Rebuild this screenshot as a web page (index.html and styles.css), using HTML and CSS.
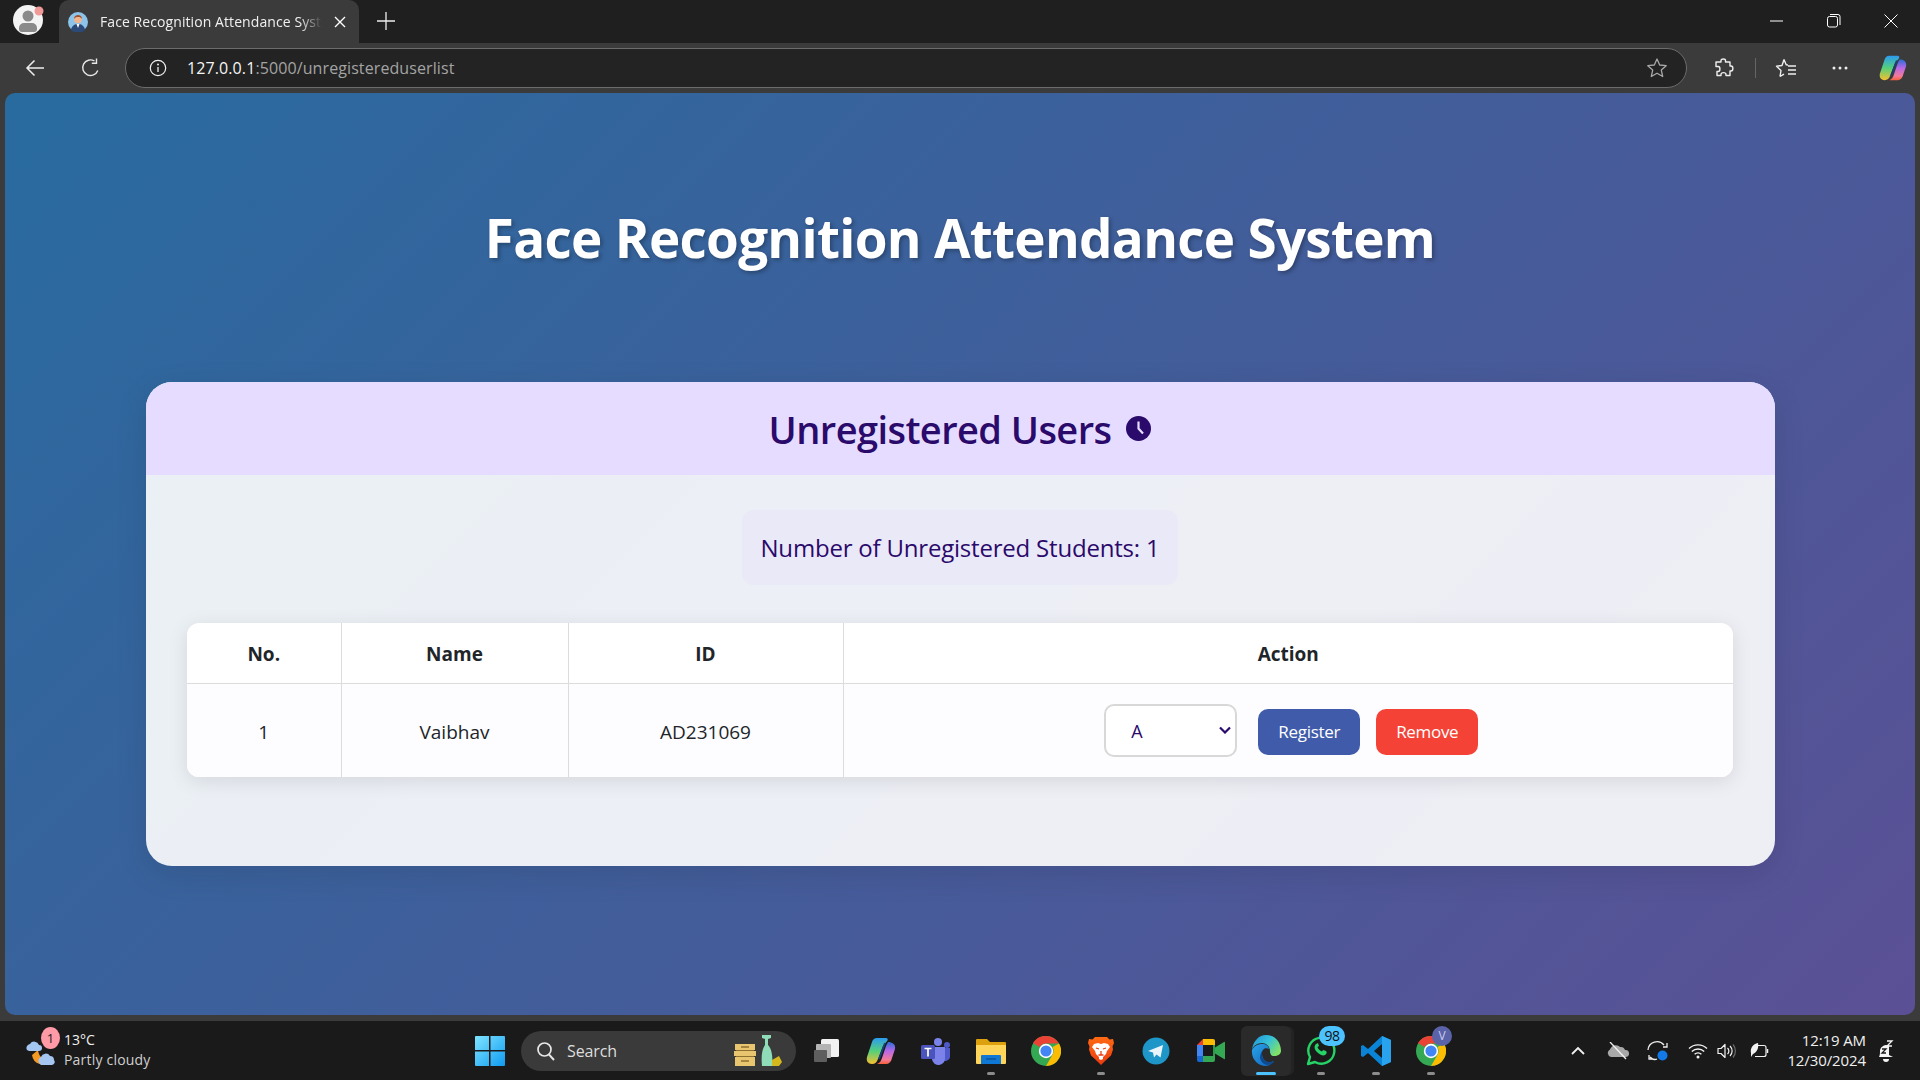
FILE: index.html
```html
<!DOCTYPE html>
<html lang="en">
<head>
<meta charset="utf-8">
<title>Face Recognition Attendance System</title>
<link rel="stylesheet" href="styles.css">
</head>
<body>
<header class="tabstrip">
  <div class="avatar">
    <svg width="40" height="40" viewBox="0 0 40 40"><circle cx="20" cy="20" r="15" fill="#f4f4f4"/><circle cx="20" cy="16" r="5.5" fill="#8a8a8a"/><path d="M11 28a5 5 0 0 1 5-5h8a5 5 0 0 1 5 5v1a3 3 0 0 1-3 3H14a3 3 0 0 1-3-3z" fill="#8a8a8a"/><circle cx="31" cy="11" r="4.5" fill="#f29a9a"/></svg>
  </div>
  <div class="tab">
    <svg class="favicon" width="20" height="20" viewBox="0 0 20 20"><circle cx="10" cy="10" r="10" fill="#8cc4ea"/><path d="M3 18c1-5 4-6 7-6s6 1 7 6a10 10 0 0 1-14 0z" fill="#2c4a78"/><path d="M8.500 12h3l-1.500 4z" fill="#fff"/><circle cx="10" cy="7.500" r="3.800" fill="#f0b48e"/><path d="M6 7c0-3 2-4 4-4s4 1 4 4c-1-1.500-2-2-4-2s-3 .5-4 2z" fill="#a0522d"/></svg>
    <span class="tab-title">Face Recognition Attendance Syst</span>
    <svg class="tab-close" width="12" height="12" viewBox="0 0 12 12"><path d="M1 1l10 10M11 1L1 11" stroke="#fff" stroke-width="1.400"/></svg>
  </div>
  <svg class="newtab" width="18" height="18" viewBox="0 0 18 18"><path d="M9 0v18M0 9h18" stroke="#eee" stroke-width="1.300"/></svg>
  <div class="winctl">
    <svg width="14" height="14" viewBox="0 0 14 14"><path d="M0 7h13" stroke="#fff" stroke-width="1"/></svg>
    <svg width="14" height="14" viewBox="0 0 14 14"><rect x=".5" y="2.500" width="10" height="10.500" rx="2" fill="none" stroke="#fff"/><path d="M3 .5h8a2 2 0 0 1 2 2V11" fill="none" stroke="#fff"/></svg>
    <svg width="14" height="14" viewBox="0 0 14 14"><path d="M.5.5l13 13M13.500.5l-13 13" stroke="#fff"/></svg>
  </div>
</header>

<nav class="toolbar">
  <svg class="tb-back" width="20" height="18" viewBox="0 0 20 18"><path d="M19 9H2M9.500 1.500L2 9l7.500 7.500" fill="none" stroke="#eee" stroke-width="1.500"/></svg>
  <svg class="tb-reload" width="20" height="20" viewBox="0 0 20 20"><path d="M16.800 12.500A7.800 7.800 0 1 1 13.500 3" fill="none" stroke="#e8e8e8" stroke-width="1.400"/><path d="M15.500 .5v4.700h-4.700" fill="none" stroke="#e8e8e8" stroke-width="1.400"/></svg>
  <div class="addressbar">
    <svg width="18" height="18" viewBox="0 0 18 18"><circle cx="9" cy="9" r="7.700" fill="none" stroke="#eee" stroke-width="1.200"/><path d="M9 8v5" stroke="#eee" stroke-width="1.300"/><circle cx="9" cy="5.500" r="1" fill="#eee"/></svg>
    <span class="url"><span class="url-host">127.0.0.1</span>:5000/unregistereduserlist</span>
    <svg class="addr-star" width="22" height="22" viewBox="0 0 22 22"><path d="M11 2l2.700 6 6.500.7-4.900 4.400 1.400 6.400L11 16.200 5.300 19.500l1.400-6.400L1.800 8.700 8.300 8z" fill="none" stroke="#a8a8a8" stroke-width="1.300" stroke-linejoin="round"/></svg>
  </div>
  <div class="tb-tools">
    <svg class="t-ext" width="20" height="20" viewBox="0 0 20 20"><path d="M7 2.500c0-2 4.500-2 4.500 0V4h4.500v4h1c2.500 0 2.500 5 0 5h-1v4.500h-4v-1c0-2.500-5-2.500-5 0v1H3v-4h1.200c2.300 0 2.300-5 0-5H2V4h5z" fill="none" stroke="#eee" stroke-width="1.400" stroke-linejoin="round"/></svg>
    <span class="t-sep"></span>
    <svg class="t-fav" width="22" height="20" viewBox="0 0 22 20"><path d="M9 1.500l2.200 5.300 1.800.2M5 18.500l1-6L1.500 8.300 7 7.500 9 1.500M5 18.500l4-2.300" fill="none" stroke="#eee" stroke-width="1.400" stroke-linejoin="round"/><path d="M13 8h8M13 12h8M13 16h8" stroke="#eee" stroke-width="1.400"/></svg>
    <svg class="t-more" width="16" height="4" viewBox="0 0 16 4"><circle cx="2" cy="2" r="1.500" fill="#eee"/><circle cx="8" cy="2" r="1.500" fill="#eee"/><circle cx="14" cy="2" r="1.500" fill="#eee"/></svg>
    <svg class="t-copilot" width="28" height="28" viewBox="0 0 30 28"><defs><linearGradient id="cpa" x1="0" y1="0" x2="0" y2="1"><stop offset="0" stop-color="#2b9cf0"/><stop offset=".5" stop-color="#55d07a"/><stop offset="1" stop-color="#f6c030"/></linearGradient><linearGradient id="cpb" x1="0" y1="0" x2="0" y2="1"><stop offset="0" stop-color="#2a6fd8"/><stop offset=".4" stop-color="#b468e8"/><stop offset=".8" stop-color="#f47a9a"/><stop offset="1" stop-color="#f6603a"/></linearGradient></defs><path d="M11 1h9c1.500 0 2 1 1.500 2.500L17 9l-5 13c-1 3-3 5-6 5-4 0-6-3-5-7L6 5c.8-2.500 2.500-4 5-4z" fill="url(#cpa)"/><path d="M22 5c4 0 8 2 7 7l-3 9c-1 4-3 6-6 6h-9c3-1 4-3 5-6l4-12z" fill="url(#cpb)"/><path d="M19 6l-6 16" stroke="#17407f" stroke-width="1.800"/></svg>
  </div>
</nav>

<main class="viewport">
  <h1 class="page-title">Face Recognition Attendance System</h1>
  <section class="card">
    <div class="card-head">
      <h2 class="card-title">Unregistered Users</h2>
      <svg width="25" height="25" viewBox="0 0 25 25"><circle cx="12.500" cy="12.500" r="12.500" fill="#2a0a6b"/><path d="M12.500 5.500v7l4.500 5" fill="none" stroke="#e6dcff" stroke-width="2.200"/></svg>
    </div>
    <div class="card-body">
      <div class="count-box">Number of Unregistered Students: 1</div>
      <table class="users">
        <thead>
          <tr><th class="c-no">No.</th><th class="c-name">Name</th><th class="c-id">ID</th><th>Action</th></tr>
        </thead>
        <tbody>
          <tr>
            <td class="cell-text">1</td><td class="cell-text">Vaibhav</td><td class="cell-text">AD231069</td>
            <td>
              <div class="actions">
                <select class="section-select"><option>A</option><option>B</option></select>
                <button class="btn btn-register">Register</button>
                <button class="btn btn-remove">Remove</button>
              </div>
            </td>
          </tr>
        </tbody>
      </table>
    </div>
  </section>
</main>

<footer class="taskbar">
  <div class="weather">
    <div class="weather-icon">
      <svg width="32" height="34" viewBox="0 0 32 34"><path d="M7 21a11 11 0 0 0 19 6A12 12 0 0 1 13 16z" fill="#f39a24"/><path d="M2 16a4 4 0 0 1 3-6 5 5 0 0 1 9 1 3 3 0 0 1 0 6H4z" fill="#a6c6f2"/><path d="M15 30a4 4 0 0 1 1-7 5 5 0 0 1 9-1 4 4 0 0 1 4 4 3 3 0 0 1-2 5H16z" fill="#a6c6f2"/></svg>
      <span class="weather-badge">1</span>
    </div>
    <div class="weather-text"><span>13°C</span><span class="weather-sub">Partly cloudy</span></div>
  </div>

  <div class="task-center">
    <svg class="start" width="30" height="30" viewBox="0 0 30 30"><defs><linearGradient id="win" x1="0" y1="0" x2="1" y2="1"><stop offset="0" stop-color="#7fe4ff"/><stop offset="1" stop-color="#0f9bf2"/></linearGradient></defs><path d="M0 1a1 1 0 0 1 1-1h13v14H0zM15.500 0H29a1 1 0 0 1 1 1v13H15.500zM0 15.500h14V30H1a1 1 0 0 1-1-1zM15.500 15.500H30V29a1 1 0 0 1-1 1H15.500z" fill="url(#win)"/></svg>
    <div class="searchbox">
      <svg width="20" height="20" viewBox="0 0 20 20"><circle cx="8.500" cy="8.500" r="6.500" fill="none" stroke="#e8e8e8" stroke-width="1.700"/><path d="M13 13.500l5 5.500" stroke="#e8e8e8" stroke-width="1.900"/></svg>
      <span class="search-label">Search</span>
      <svg class="search-art" width="48" height="32" viewBox="0 0 48 32"><path d="M1 9h20v6H1zM0 16h22v5H0zM1 22h20v9H1z" fill="#e8c56e"/><path d="M2 15h18v1H2zM2 21h18v1H2z" fill="#8d7030"/><path d="M7 12h8M7 26h8" stroke="#8d7030" stroke-width="1.500"/><path d="M28 0h9v3l-3 1v6c4 4 5 12 4 21h-10c-1-9 0-17 3-21V4l-3-1z" fill="#8fdcb8"/><path d="M38 25l7-4 3 6-3 4h-7z" fill="#d6b81e"/></svg>
    </div>
    <div class="app app-first">
      <svg width="28" height="28" viewBox="0 0 28 28"><rect x="9" y="2" width="18" height="18" rx="1.500" fill="#f2f2f2"/><rect x="4" y="7" width="15" height="14" rx="1" fill="#b4b4b4"/><rect x="2" y="13" width="13" height="12" rx="1" fill="#5e5e5e"/></svg>
    </div>
    <div class="app">
      <svg width="30" height="28" viewBox="0 0 30 28"><defs><linearGradient id="cpc" x1="0" y1="0" x2="0" y2="1"><stop offset="0" stop-color="#2b9cf0"/><stop offset=".5" stop-color="#55d07a"/><stop offset="1" stop-color="#f6c030"/></linearGradient><linearGradient id="cpd" x1="0" y1="0" x2="0" y2="1"><stop offset="0" stop-color="#2a6fd8"/><stop offset=".4" stop-color="#b468e8"/><stop offset=".8" stop-color="#f47a9a"/><stop offset="1" stop-color="#f6603a"/></linearGradient></defs><path d="M11 1h9c1.500 0 2 1 1.500 2.500L17 9l-5 13c-1 3-3 5-6 5-4 0-6-3-5-7L6 5c.8-2.500 2.500-4 5-4z" fill="url(#cpc)"/><path d="M22 5c4 0 8 2 7 7l-3 9c-1 4-3 6-6 6h-9c3-1 4-3 5-6l4-12z" fill="url(#cpd)"/><path d="M19 6l-6 16" stroke="#17407f" stroke-width="1.800"/></svg>
    </div>
    <div class="app">
      <svg width="30" height="28" viewBox="0 0 30 28"><circle cx="17" cy="5" r="4" fill="#7b83eb"/><circle cx="26" cy="8" r="3" fill="#5059c9"/><path d="M21 11h8v9a5 5 0 0 1-8 3z" fill="#5059c9"/><path d="M9 10h15v11a6.500 6.500 0 0 1-13 1z" fill="#7b83eb"/><rect x="0" y="8" width="14" height="14" rx="1.500" fill="#4b53bc"/><path d="M3.500 11.500h7M7 11.500v8" stroke="#fff" stroke-width="1.700"/></svg>
    </div>
    <div class="app has-dot">
      <svg width="30" height="28" viewBox="0 0 30 28"><path d="M0 3a1 1 0 0 1 1-1h10l3 3h15a1 1 0 0 1 1 1v4H0z" fill="#dca10c"/><path d="M0 8h30v18a1 1 0 0 1-1 1H1a1 1 0 0 1-1-1z" fill="#ffd65a"/><path d="M5 19a1 1 0 0 1 1-1h18a1 1 0 0 1 1 1v8H5z" fill="#0f78d4"/><path d="M10 22h10" stroke="#0a4f8f" stroke-width="1.300"/></svg>
    </div>
    <div class="app">
      <svg width="30" height="30" viewBox="0 0 30 30"><circle cx="15" cy="15" r="15" fill="#34a853"/><path d="M15 0a15 15 0 0 1 13 7.500H15A7.500 7.500 0 0 0 8.500 11L2 7a15 15 0 0 1 13-7z" fill="#ea4335"/><path d="M28 7.500A15 15 0 0 1 15 30l6.500-11.300A7.500 7.500 0 0 0 21.500 11z" fill="#fbbc04"/><circle cx="15" cy="15" r="7.200" fill="#fff"/><circle cx="15" cy="15" r="5.600" fill="#4285f4"/></svg>
    </div>
    <div class="app has-dot">
      <svg width="26" height="28" viewBox="0 0 26 28"><defs><linearGradient id="brv" x1="0" y1="0" x2="0" y2="1"><stop offset="0" stop-color="#ff6a13"/><stop offset="1" stop-color="#ee3a10"/></linearGradient></defs><path d="M7 0h12l2.500 2.500L25 2l1 4-1.500 3.500.5 3-2 6-6 5.500-4 4-4-4-6-5.500-2-6 .5-3L0 6l1-4 3.500.5z" fill="url(#brv)"/><path d="M6 7l4-1 3 1 3-1 4 1 2 3-3 4-1 3-3 3v2l-2 1-2-1v-2l-3-3-1-3-3-4z" fill="#fff"/><path d="M8 11l3 1M18 11l-3 1M13 14v4M10.500 18h5" stroke="#ee3a10" stroke-width="1.300" fill="none"/></svg>
    </div>
    <div class="app">
      <svg width="28" height="28" viewBox="0 0 28 28"><circle cx="14" cy="14" r="13.500" fill="#1e96c8"/><path d="M21 8L6 14l5 1.500 1 5 2.500-3 4 3z" fill="#e9f5fb"/></svg>
    </div>
    <div class="app">
      <svg width="28" height="23" viewBox="0 0 28 23"><path d="M6 0v6H0z" fill="#ea4335"/><path d="M0 6h6v11H0z" fill="#4285f4"/><path d="M0 17h6v6H2a2 2 0 0 1-2-2z" fill="#1967d2"/><path d="M6 0h10a2 2 0 0 1 2 2v4H6z" fill="#fbbc04"/><path d="M6 17h12v4a2 2 0 0 1-2 2H6z" fill="#34a853"/><path d="M16 6h2v11h-2z" fill="#2a9d4a"/><path d="M18 8.500L27 3a.7.7 0 0 1 1 .6v15.800a.7.7 0 0 1-1 .6l-9-5.500z" fill="#34a853"/></svg>
    </div>
    <div class="app app-active">
      <svg width="30" height="31" viewBox="0 0 30 31"><defs><linearGradient id="edg" x1="0" y1="0" x2="1" y2=".6"><stop offset="0" stop-color="#1f8fd8"/><stop offset=".55" stop-color="#35c1d8"/><stop offset="1" stop-color="#7fe06a"/></linearGradient><linearGradient id="edh" x1="0" y1="0" x2="1" y2="1"><stop offset="0" stop-color="#2aa4ea"/><stop offset="1" stop-color="#0f62b8"/></linearGradient></defs><path d="M1 15C2 6 8 0 15 0c9 0 15 7 15 16 0 3-3 5-7 5-3 0-4-2-4-5 0-5-4-8-8-8-5 0-9 3-10 7z" fill="url(#edg)"/><path d="M1 15c2-4 6-6 10-6s7 2 7 5c-4-2-8 1-7 6 1 6 6 9 12 6-2 3-5 5-8 5C7 31 0 24 1 15z" fill="url(#edh)"/><path d="M11 20c1 6 6 9 12 6-1 2-3 4-6 4-4 0-7-3-8-7 0-3 1-6 3-8-1 1-1 3-1 5z" fill="#0d4a92"/></svg>
      <span class="active-bar"></span>
    </div>
    <div class="app has-dot">
      <svg width="30" height="30" viewBox="0 0 30 30"><path d="M2 28l2-7A13 13 0 1 1 9 26z" fill="none" stroke="#25d366" stroke-width="2.400" stroke-linejoin="round"/><path d="M10 8c-2 2-2 5 1 8s6 4 8 3 2-3 1-4l-3-1-1 1.500c-2-.5-4-2.500-4.500-4.500l1.500-1-1-3z" fill="#25d366"/></svg>
      <span class="wa-badge">98</span>
    </div>
    <div class="app has-dot">
      <svg width="30" height="30" viewBox="0 0 30 30"><path d="M21 0l9 4v22l-9 4-14-13-5 4-2-1V10l2-1 5 4zM21 8l-8 7 8 7z" fill="#0a84d6"/><path d="M21 0l9 4v22l-9 4z" fill="#2aa3ee"/></svg>
    </div>
    <div class="app has-dot">
      <svg width="30" height="30" viewBox="0 0 30 30"><circle cx="15" cy="15" r="15" fill="#34a853"/><path d="M15 0a15 15 0 0 1 13 7.500H15A7.500 7.500 0 0 0 8.500 11L2 7a15 15 0 0 1 13-7z" fill="#ea4335"/><path d="M28 7.500A15 15 0 0 1 15 30l6.500-11.300A7.500 7.500 0 0 0 21.500 11z" fill="#fbbc04"/><circle cx="15" cy="15" r="7.200" fill="#fff"/><circle cx="15" cy="15" r="5.600" fill="#4285f4"/></svg>
      <span class="profile-badge">V</span>
    </div>
  </div>

  <div class="tray">
    <svg class="tr-chev" width="14" height="9" viewBox="0 0 14 9"><path d="M1 8l6-6 6 6" fill="none" stroke="#f2f2f2" stroke-width="1.800"/></svg>
    <svg class="tr-cloud" width="22" height="18" viewBox="0 0 22 18"><path d="M4 15a4 4 0 0 1-1-7.500A6 6 0 0 1 13 5a4.500 4.500 0 0 1 5 3 3.500 3.500 0 0 1 1 7z" fill="#a8a8a8"/><path d="M3 0l16 17" stroke="#f2f2f2" stroke-width="1.300"/></svg>
    <svg class="tr-sync" width="22" height="22" viewBox="0 0 22 22"><path d="M1 10a9 9 0 0 1 16-5" fill="none" stroke="#eee" stroke-width="1.300"/><path d="M20 3v4h-4" fill="none" stroke="#eee" stroke-width="1.300"/><path d="M2 15v4h4M3 17c2 2 5 3 7 2" fill="none" stroke="#eee" stroke-width="1.300"/><circle cx="15.500" cy="15.500" r="5" fill="#1379e8"/></svg>
    <svg class="tr-wifi" width="20" height="16" viewBox="0 0 20 16"><path d="M1 5.500a13 13 0 0 1 18 0M3.800 8.500a9 9 0 0 1 12.400 0M6.600 11.300a5 5 0 0 1 6.800 0" fill="none" stroke="#f2f2f2" stroke-width="1.400"/><circle cx="10" cy="14" r="1.500" fill="#f2f2f2"/></svg>
    <svg class="tr-vol" width="20" height="16" viewBox="0 0 20 16"><path d="M1 5.500h3l4-4v13l-4-4H1z" fill="none" stroke="#f2f2f2" stroke-width="1.200" stroke-linejoin="round"/><path d="M10.500 5a4 4 0 0 1 0 6M13 3a7 7 0 0 1 0 10" fill="none" stroke="#f2f2f2" stroke-width="1.200"/><path d="M16 1.500a10 10 0 0 1 0 13" fill="none" stroke="#6a6a6a" stroke-width="1.200"/></svg>
    <svg class="tr-batt" width="20" height="16" viewBox="0 0 20 16"><path d="M8 2.500h7a2 2 0 0 1 2 2v7a2 2 0 0 1-2 2H6" fill="none" stroke="#f2f2f2" stroke-width="1.200"/><path d="M18.500 6v4" stroke="#f2f2f2" stroke-width="1.500"/><path d="M2 10C1 5 4 1 9 0c1 5-1 9-5 11l-2 3z" fill="#f2f2f2"/></svg>
    <div class="clock"><span>12:19 AM</span><span>12/30/2024</span></div>
    <svg class="tr-bell" width="18" height="22" viewBox="0 0 18 22"><path d="M2 17c1-2 1-4 1-7a6 6 0 0 1 9-4v9l4 2z" fill="#f4f4f4"/><path d="M6 19a3 3 0 0 0 6 0z" fill="#f4f4f4"/><path d="M10 1h5l-5 5h5" fill="none" stroke="#f4f4f4" stroke-width="1.300"/><path d="M5 9h4l-4 4h4" fill="none" stroke="#1a1a1a" stroke-width="1.300"/></svg>
  </div>
</footer>
</body>
</html>
```

FILE: styles.css
```css
* { box-sizing: border-box; }
html, body { height: 100%; }
body {
  margin: 0;
  height: 1080px;
  display: flex;
  flex-direction: column;
  background: #3b3b3b;
  font-family: "Open Sans", "Noto Sans", sans-serif;
  overflow: hidden;
}

/* Browser tab strip */
.tabstrip {
  height: 43px;
  flex: none;
  display: flex;
  align-items: flex-start;
  background: #1f1f1f;
}
.avatar { width: 59px; height: 43px; display: flex; padding-left: 8px; }
.tab {
  width: 300px;
  height: 43px;
  background: #3b3b3b;
  border-radius: 10px 10px 0 0;
  display: flex;
  align-items: center;
  padding-left: 9px;
  color: #f0f0f0;
  font-size: 14px;
}
.favicon { flex: none; }
.tab-title {
  margin-left: 12px;
  width: 222px;
  white-space: nowrap;
  overflow: hidden;
  letter-spacing: 0.08px;
  -webkit-mask-image: linear-gradient(90deg, #000 90%, transparent);
  mask-image: linear-gradient(90deg, #000 90%, transparent);
}
.tab-close { margin-left: 12px; flex: none; }
.newtab { margin: 12px 0 0 18px; }
.winctl { margin-left: auto; display: flex; gap: 43px; padding: 14px 22px 0 0; }

/* Browser toolbar */
.toolbar {
  height: 50px;
  flex: none;
  display: flex;
  align-items: center;
  background: #3b3b3b;
}
.tb-back { margin-left: 25px; }
.tb-reload { margin-left: 36px; }
.addressbar {
  margin-left: 24px;
  width: 1562px;
  height: 40px;
  border: 1px solid #6c6c6c;
  border-radius: 20px;
  background: #232323;
  display: flex;
  align-items: center;
  padding: 0 18px 0 23px;
}
.url { margin-left: 20px; font-size: 16px; color: #a4a4a4; letter-spacing: 0.1px; white-space: nowrap; }
.url-host { color: #f5f5f5; }
.addr-star { margin-left: auto; }
.tb-tools { flex: 1; display: flex; align-items: center; }
.t-ext { margin-left: 27px; }
.t-sep { width: 1px; height: 20px; background: #666; margin-left: 21px; }
.t-fav { margin-left: 19px; }
.t-more { margin-left: 35px; }
.t-copilot { margin-left: 31px; }

/* Page viewport */
.viewport {
  height: 922px;
  flex: none;
  margin: 0 5px;
  border-radius: 10px;
  background: linear-gradient(135deg, #286b9f, #5b5096);
  display: flex;
  flex-direction: column;
  align-items: center;
}
.page-title {
  margin: 105px 0 0;
  height: 79px;
  line-height: 79px;
  font-size: 53px;
  font-weight: 700;
  color: #fff;
  letter-spacing: -0.72px;
  text-shadow: 2px 2px 4px rgba(0, 0, 0, 0.3);
}
.card {
  margin-top: 105px;
  width: 1629px;
  height: 484px;
  border-radius: 26px;
  overflow: hidden;
  background: rgba(255, 255, 255, 0.9);
  box-shadow: 0 8px 32px rgba(0, 0, 0, 0.1);
}
.card-head {
  height: 93px;
  background: #e6dcff;
  display: flex;
  align-items: center;
  justify-content: center;
  gap: 15px;
  color: #2a0a6b;
}
.card-title { margin: 0; font-size: 38px; font-weight: 600; letter-spacing: -0.57px; }
.card-body {
  padding: 35px 41px 0;
  display: flex;
  flex-direction: column;
  align-items: center;
}
.count-box {
  width: 436px;
  height: 75px;
  border-radius: 12px;
  background: rgba(230, 220, 255, 0.3);
  color: #2a0a6b;
  font-size: 24px;
  letter-spacing: -0.2px;
  display: flex;
  align-items: center;
  justify-content: center;
  white-space: nowrap;
}
.users {
  margin-top: 38px;
  width: 1546px;
  table-layout: fixed;
  border-collapse: collapse;
  background: #fff;
  border-radius: 12px;
  box-shadow: 0 4px 20px rgba(0, 0, 0, 0.1);
  color: #212529;
  font-size: 19px;
  text-align: center;
}
.users th, .users td { border-left: 1px solid #dcdcdc; padding: 0; }
.users th:first-child, .users td:first-child { border-left: 0; }
.users th { height: 60px; font-weight: 700; border-bottom: 1px solid #dcdcdc; padding-top: 2px; }
.users td { height: 94px; background: #fdfdff; }
.users td.cell-text { padding-top: 4px; }
.users tbody tr td:first-child { border-bottom-left-radius: 12px; }
.users tbody tr td:last-child { border-bottom-right-radius: 12px; }
.c-no { width: 154px; }
.c-name { width: 227px; }
.c-id { width: 275px; }
.actions { display: flex; align-items: center; justify-content: center; padding-left: 6px; }
.section-select {
  appearance: none;
  -webkit-appearance: none;
  width: 133px;
  height: 53px;
  padding: 2px 0 0 25px;
  border: 2px solid #d8d8d8;
  border-radius: 10px;
  background: #fff url("data:image/svg+xml,%3Csvg xmlns='http://www.w3.org/2000/svg' width='12' height='8' viewBox='0 0 12 8'%3E%3Cpath d='M1 1.500l5 5 5-5' fill='none' stroke='%232a0a6b' stroke-width='2.200'/%3E%3C/svg%3E") no-repeat right 4px center;
  color: #2a0a6b;
  font-family: inherit;
  font-size: 18px;
}
.btn {
  width: 102px;
  height: 46px;
  margin-top: 3px;
  border: 0;
  border-radius: 10px;
  color: #fff;
  font-family: inherit;
  font-size: 17px;
  letter-spacing: -0.3px;
}
.btn-register { margin-left: 21px; background: #3f5ba9; }
.btn-remove { margin-left: 16px; background: #f44336; }

/* Windows taskbar */
.taskbar {
  margin-top: 6px;
  height: 59px;
  flex: none;
  background: #1a1a1a;
  display: flex;
  align-items: center;
  color: #f0f0f0;
}
.weather { width: 475px; padding-left: 25px; display: flex; align-items: center; gap: 8px; flex: none; }
.weather-icon { position: relative; width: 31px; height: 34px; }
.weather-badge {
  position: absolute;
  left: 16px;
  top: -7px;
  width: 19px;
  height: 22px;
  border-radius: 50%;
  background: #ff9aa6;
  color: #1a1a1a;
  font-size: 13px;
  text-align: center;
  line-height: 22px;
}
.weather-text { display: flex; flex-direction: column; font-size: 14px; line-height: 20px; margin-top: -2px; }
.weather-sub { color: #cfcfcf; letter-spacing: 0.2px; }
.task-center { display: flex; align-items: center; flex: none; }
.start { flex: none; }
.searchbox {
  margin-left: 16px;
  width: 275px;
  height: 40px;
  border-radius: 20px;
  background: #3a3a3a;
  display: flex;
  align-items: center;
  padding: 0 14px 0 15px;
  color: #dedede;
  font-size: 16px;
}
.search-label { margin-left: 11px; letter-spacing: -0.1px; }
.search-art { margin-left: auto; }
.app {
  position: relative;
  width: 55px;
  height: 58px;
  display: flex;
  align-items: center;
  justify-content: center;
  flex: none;
}
.app-first { margin-left: 2px; }
.has-dot::after {
  content: "";
  position: absolute;
  bottom: 5px;
  left: 24px;
  width: 8px;
  height: 3px;
  border-radius: 2px;
  background: #8c8c8c;
}
.app-active {
  width: 50px;
  margin: 0 2.500px;
  height: 50px;
  background: #2a2a2a;
  border-radius: 6px;
  box-shadow: 4px 0 0 -1px #232323;
}
.active-bar {
  position: absolute;
  bottom: 1px;
  left: 15px;
  width: 20px;
  height: 3px;
  border-radius: 2px;
  background: #4cc2ff;
}
.wa-badge {
  position: absolute;
  top: 4px;
  left: 26px;
  width: 26px;
  height: 20px;
  border-radius: 10px;
  background: #4cc2ff;
  color: #111;
  font-size: 14px;
  text-align: center;
  line-height: 20px;
  letter-spacing: -0.4px;
}
.profile-badge {
  position: absolute;
  top: 4px;
  right: 6px;
  width: 20px;
  height: 20px;
  border-radius: 50%;
  background: #5a62a8;
  color: #c8ccf0;
  font-size: 12px;
  text-align: center;
  line-height: 20px;
}
.tray { flex: 1; display: flex; align-items: center; }
.tr-chev { margin-left: 113px; }
.tr-cloud { margin-left: 22px; }
.tr-sync { margin-left: 18px; }
.tr-wifi { margin-left: 19px; }
.tr-vol { margin-left: 9px; }
.tr-batt { margin-left: 12px; }
.clock {
  margin-left: auto;
  margin-top: -2px;
  display: flex;
  flex-direction: column;
  align-items: flex-end;
  font-size: 15px;
  line-height: 20px;
  letter-spacing: -0.1px;
}
.tr-bell { margin: 0 25px 0 11px; }
```
